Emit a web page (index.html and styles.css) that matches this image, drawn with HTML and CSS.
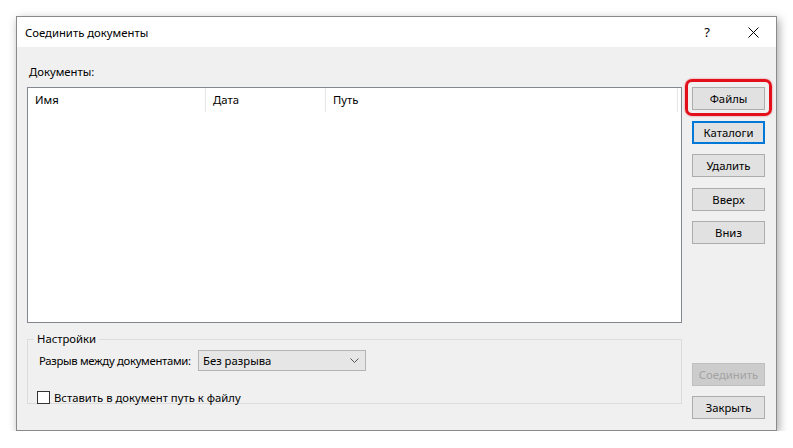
FILE: index.html
```html
<!DOCTYPE html>
<html lang="ru">
<head>
    <meta charset="UTF-8">
    <title>Соединить документы</title>
    <link rel="stylesheet" href="styles.css">
</head>
<body>
    <div class="window">
        <div class="titlebar">
            <span class="title">Соединить документы</span>
            <span class="tb-btn">?</span>
            <span class="tb-btn">
                <svg width="11" height="11" viewBox="0 0 11 11"><path d="M0.5 0.5 L10.5 10.5 M10.5 0.5 L0.5 10.5" stroke="#000" stroke-width="1" fill="none"/></svg>
            </span>
        </div>
        <div class="content">
            <div class="left">
                <p class="label">Документы:</p>
                <div class="list">
                    <div class="list-head">
                        <div class="col col-name">Имя</div>
                        <div class="col col-date">Дата</div>
                        <div class="col col-path">Путь</div>
                    </div>
                </div>
                <fieldset class="group">
                    <legend>Настройки</legend>
                    <div class="row">
                        <span class="row-label">Разрыв между документами:</span>
                        <div class="select">
                            <span>Без разрыва</span>
                            <svg width="9" height="5" viewBox="0 0 9 5"><path d="M0.5 0.5 L4.5 4.5 L8.5 0.5" stroke="#555" stroke-width="1" fill="none"/></svg>
                        </div>
                    </div>
                    <label class="check">
                        <span class="box"></span>
                        Вставить в документ путь к файлу
                    </label>
                </fieldset>
            </div>
            <div class="right">
                <div class="buttons">
                    <div class="marked"><button class="btn">Файлы</button></div>
                    <button class="btn focused">Каталоги</button>
                    <button class="btn">Удалить</button>
                    <button class="btn">Вверх</button>
                    <button class="btn">Вниз</button>
                </div>
                <div class="buttons">
                    <button class="btn disabled">Соединить</button>
                    <button class="btn">Закрыть</button>
                </div>
            </div>
        </div>
    </div>
</body>
</html>
```

FILE: styles.css
```css
body {
    margin: 0;
    background: #ffffff;
    font-family: "Noto Sans", "Open Sans", sans-serif;
    font-size: 11.3px;
    color: #000000;
}
.window {
    margin: 16px 0 0 16px;
    width: 759px;
    height: 413px;
    border: 1px solid #8a8a8a;
    background: #f0f0f0;
    box-shadow: 2px 3px 9px rgba(0, 0, 0, 0.35);
    display: flex;
    flex-direction: column;
}
.titlebar {
    height: 30px;
    background: #ffffff;
    display: flex;
    align-items: center;
    padding-left: 8px;
}
.title {
    flex: 1;
}
.tb-btn {
    width: 46px;
    height: 30px;
    display: flex;
    align-items: center;
    justify-content: center;
    font-size: 13px;
}
.content {
    flex: 1;
    display: flex;
    padding: 0 11px 11px 10px;
    gap: 10px;
}
.left {
    width: 656px;
    display: flex;
    flex-direction: column;
}
.label {
    margin: 17px 0 0 2px;
    line-height: 16px;
    height: 16px;
}
.list {
    margin-top: 7px;
    height: 234px;
    background: #ffffff;
    border: 1px solid #828790;
}
.list-head {
    display: flex;
    height: 24px;
}
.col {
    line-height: 24px;
    padding-left: 7px;
    border-right: 1px solid #e5e5e5;
    box-sizing: border-box;
}
.col-name {
    width: 178px;
}
.col-date {
    width: 120px;
}
.col-path {
    width: 352px;
}
.group {
    margin: 9px 0 0 0;
    padding: 0 0 0 11px;
    height: 70px;
    border: 1px solid #dcdcdc;
}
.group legend {
    padding: 0 3px;
    margin-left: -5px;
    line-height: 14px;
}
.row {
    display: flex;
    align-items: center;
    gap: 8px;
    margin-top: 4px;
}
.row-label {
    width: 151px;
    white-space: nowrap;
    letter-spacing: -0.3px;
}
.select {
    height: 19px;
    width: 156px;
    border: 1px solid #b4b4b4;
    background: #e6e6e6;
    display: flex;
    align-items: center;
    justify-content: space-between;
    padding: 0 6px 0 4px;
}
.check {
    display: flex;
    align-items: center;
    gap: 4px;
    margin-top: 19px;
    margin-left: -2px;
}
.box {
    width: 11px;
    height: 11px;
    border: 1px solid #333333;
    background: #ffffff;
}
.right {
    width: 73px;
    display: flex;
    flex-direction: column;
    justify-content: space-between;
    padding-top: 40px;
}
.buttons {
    display: flex;
    flex-direction: column;
    gap: 10.5px;
}
.btn {
    width: 73px;
    height: 23px;
    margin: 0;
    padding: 0;
    font-family: inherit;
    font-size: 11.3px;
    color: #000000;
    background: #e1e1e1;
    border: 1px solid #adadad;
}
.btn.focused {
    border: 2px solid #0078d7;
}
.btn.disabled {
    background: #cccccc;
    border-color: #bfbfbf;
    color: #a3a3a3;
}
.marked {
    position: relative;
    height: 23px;
}
.marked::after {
    content: "";
    position: absolute;
    left: -7px;
    right: -7px;
    top: -8px;
    bottom: -6px;
    border: 3px solid #e3101c;
    border-radius: 7px;
    box-shadow: 0 0 2px rgba(227, 16, 28, 0.6);
}
```
